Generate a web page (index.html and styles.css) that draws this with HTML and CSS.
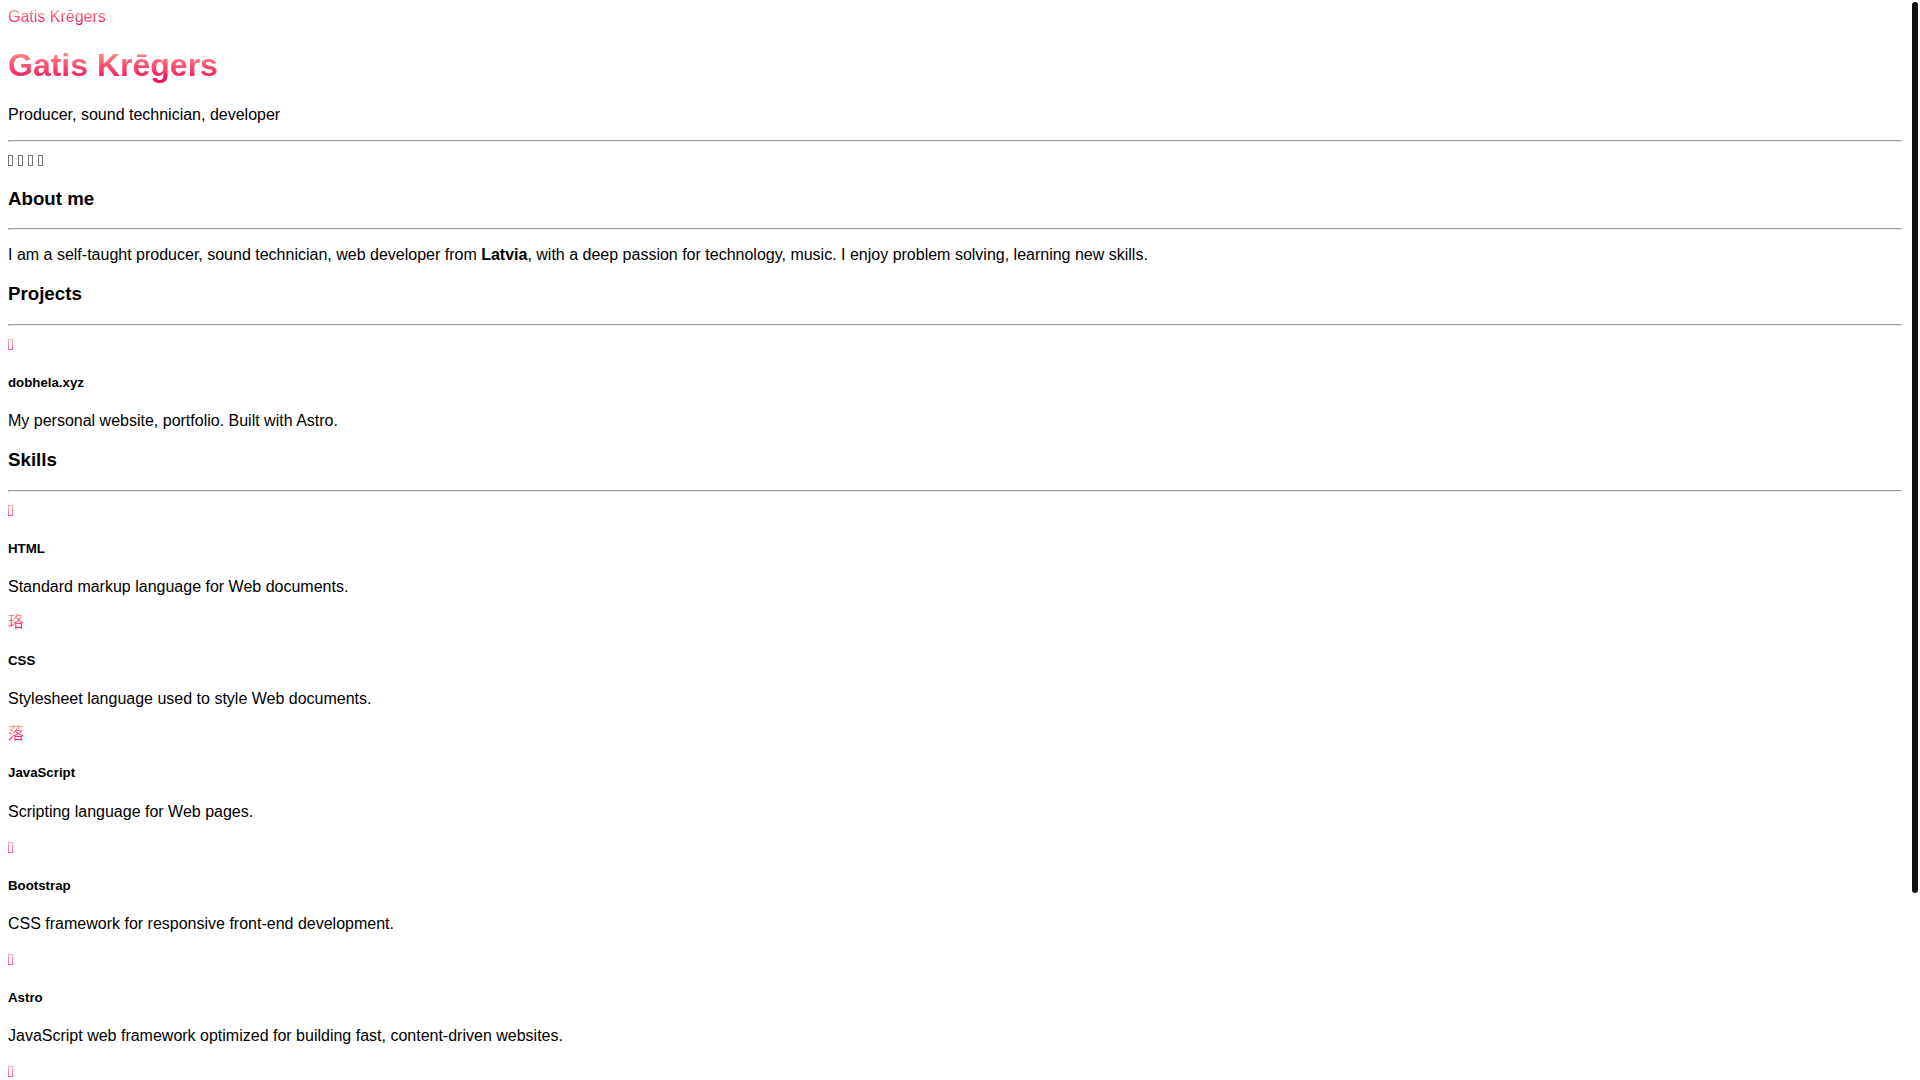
FILE: index.html
```html
<!DOCTYPE html>
<html lang="en">
<head>
<meta charset="utf-8">
<title>Gatis Krēgers</title>
<link rel="stylesheet" href="styles.css">
</head>
<body>
<header>
  <a class="brand gradient" href="#">Gatis Krēgers</a>
</header>
<main>
  <section>
    <h1 class="gradient">Gatis Krēgers</h1>
    <p>Producer, sound technician, developer</p>
    <hr>
    <nav class="social">
      <a href="#" aria-label="GitHub"><span class="box"></span></a>
      <a href="#" aria-label="Twitter"><span class="box"></span></a>
      <a href="#" aria-label="Instagram"><span class="box"></span></a>
      <a href="#" aria-label="Email"><span class="box"></span></a>
    </nav>
  </section>
  <section>
    <h3>About me</h3>
    <hr>
    <p>I am a self-taught producer, sound technician, web developer from <b>Latvia</b>, with a deep passion for technology, music. I enjoy problem solving, learning new skills.</p>
  </section>
  <section>
    <h3>Projects</h3>
    <hr>
    <div class="icon"><span class="box box-pink"></span></div>
    <h5>dobhela.xyz</h5>
    <p>My personal website, portfolio. Built with Astro.</p>
  </section>
  <section>
    <h3>Skills</h3>
    <hr>
    <div class="icon"><span class="box box-pink"></span></div>
    <h5>HTML</h5>
    <p>Standard markup language for Web documents.</p>
    <div class="glyph gradient">珞</div>
    <h5>CSS</h5>
    <p>Stylesheet language used to style Web documents.</p>
    <div class="glyph gradient">落</div>
    <h5>JavaScript</h5>
    <p>Scripting language for Web pages.</p>
    <div class="icon"><span class="box box-pink"></span></div>
    <h5>Bootstrap</h5>
    <p>CSS framework for responsive front-end development.</p>
    <div class="icon"><span class="box box-pink"></span></div>
    <h5>Astro</h5>
    <p>JavaScript web framework optimized for building fast, content-driven websites.</p>
    <div class="icon"><span class="box box-pink"></span></div>
  </section>
</main>
<div class="scroll-thumb"></div>
</body>
</html>
```
FILE: styles.css
```css
body {
  margin: 8px 18px 8px 8px;
  font-family: "Liberation Sans", "Noto Sans CJK JP", sans-serif;
}

.gradient {
  background: linear-gradient(#fda492, #f5004f);
  -webkit-background-clip: text;
  background-clip: text;
  color: transparent;
}

.brand {
  text-decoration: none;
}

.social {
  display: flex;
  gap: 5px;
}

.social,
.icon {
  padding-top: 5px;
  padding-bottom: 3px;
}

.social a,
.icon {
  display: flex;
}

.glyph {
  line-height: 19px;
}

.box {
  width: 5px;
  height: 11px;
  box-sizing: border-box;
  border: 1px solid #777;
}

.box-pink {
  border-image: linear-gradient(#fbb5ae, #f5608e) 1;
}

.scroll-thumb {
  position: fixed;
  top: 2px;
  right: 2px;
  width: 6px;
  height: 82.5vh;
  border-radius: 3px;
  background: #111;
}
```
